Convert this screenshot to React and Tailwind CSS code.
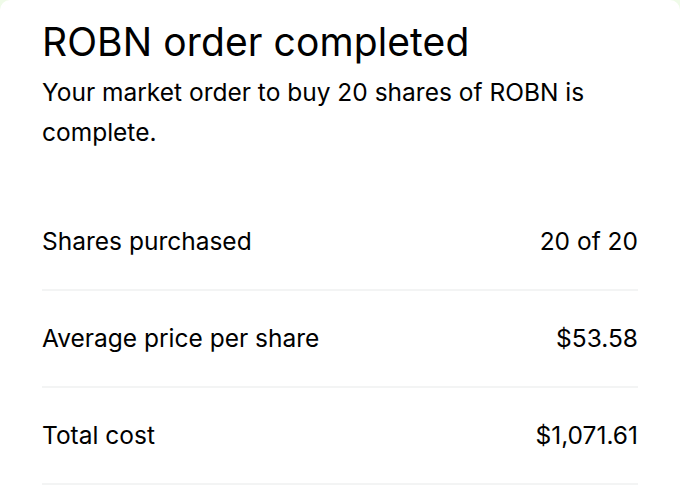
export default function App() {
  const rows = [
    { label: 'Shares purchased', value: '20 of 20' },
    { label: 'Average price per share', value: '$53.58' },
    { label: 'Total cost', value: '$1,071.61' },
  ];

  return (
    <div className="w-[680px] h-[494px] overflow-hidden bg-[#effbe8] font-['Inter',sans-serif] text-black">
      <div className="h-full bg-white rounded-t-[10px] px-[42px] pt-[18px]">
        <h1 className="text-[39px] leading-[48px] font-normal tracking-[0.1px]">ROBN order completed</h1>
        <p className="mt-[6px] text-[24.5px] leading-[40px]">
          Your market order to buy 20 shares of ROBN is complete.
        </p>

        <div className="mt-[42px] w-[596px]">
          {rows.map((row) => (
            <div
              key={row.label}
              className="h-[97px] flex items-center justify-between border-b-2 border-[#f3f4f4] text-[24.5px]"
            >
              <span>{row.label}</span>
              <span>{row.value}</span>
            </div>
          ))}
        </div>
      </div>
    </div>
  );
}
